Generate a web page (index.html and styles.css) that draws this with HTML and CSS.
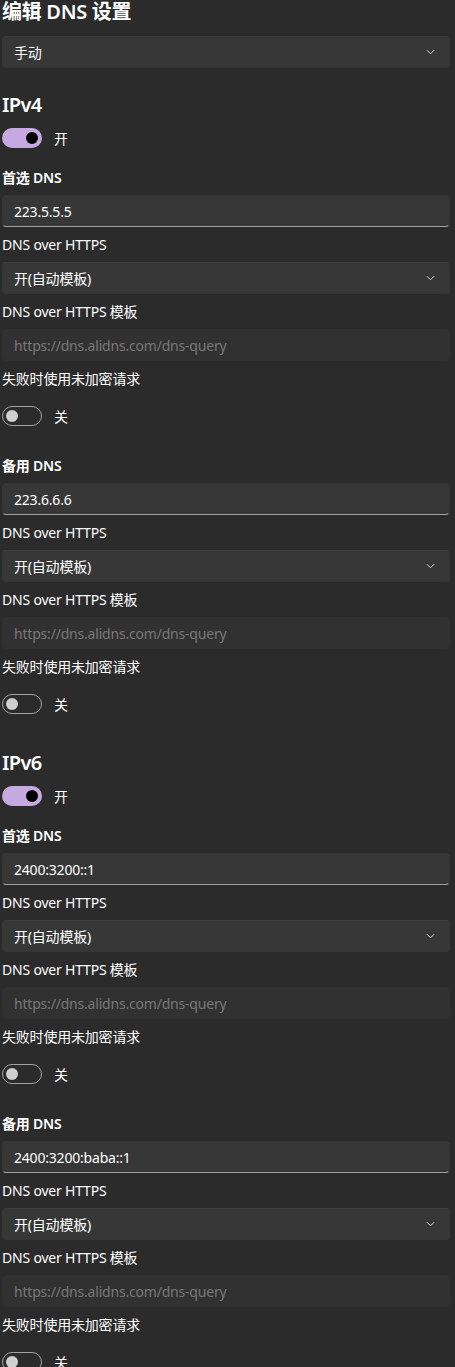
FILE: index.html
```html
<!DOCTYPE html>
<html lang="zh-CN">

<head>
    <meta charset="utf-8">
    <title>编辑 DNS 设置</title>
    <link rel="stylesheet" href="styles.css">
</head>

<body>
    <div class="page">
        <h1 class="title">编辑 DNS 设置</h1>
        <div class="select top-select"><span>手动</span><svg class="chevron" viewBox="0 0 10 6"><polyline points="1,1 5,5 9,1" /></svg></div>

        <!-- IPv4 -->
        <div class="section">
            <h2 class="heading">IPv4</h2>
            <div class="switch-row"><div class="toggle on"><span class="knob"></span></div><span>开</span></div>

            <div class="group">
                <div class="label strong">首选 DNS</div>
                <div class="input filled">223.5.5.5</div>
                <div class="label">DNS over HTTPS</div>
                <div class="select"><span>开(自动模板)</span><svg class="chevron" viewBox="0 0 10 6"><polyline points="1,1 5,5 9,1" /></svg></div>
                <div class="label">DNS over HTTPS 模板</div>
                <div class="input empty">https://dns.alidns.com/dns-query</div>
                <div class="label">失败时使用未加密请求</div>
                <div class="switch-row gap"><div class="toggle off"><span class="knob"></span></div><span>关</span></div>
            </div>

            <div class="group">
                <div class="label strong">备用 DNS</div>
                <div class="input filled">223.6.6.6</div>
                <div class="label">DNS over HTTPS</div>
                <div class="select"><span>开(自动模板)</span><svg class="chevron" viewBox="0 0 10 6"><polyline points="1,1 5,5 9,1" /></svg></div>
                <div class="label">DNS over HTTPS 模板</div>
                <div class="input empty">https://dns.alidns.com/dns-query</div>
                <div class="label">失败时使用未加密请求</div>
                <div class="switch-row gap"><div class="toggle off"><span class="knob"></span></div><span>关</span></div>
            </div>
        </div>

        <!-- IPv6 -->
        <div class="section">
            <h2 class="heading">IPv6</h2>
            <div class="switch-row"><div class="toggle on"><span class="knob"></span></div><span>开</span></div>

            <div class="group">
                <div class="label strong">首选 DNS</div>
                <div class="input filled">2400:3200::1</div>
                <div class="label">DNS over HTTPS</div>
                <div class="select"><span>开(自动模板)</span><svg class="chevron" viewBox="0 0 10 6"><polyline points="1,1 5,5 9,1" /></svg></div>
                <div class="label">DNS over HTTPS 模板</div>
                <div class="input empty">https://dns.alidns.com/dns-query</div>
                <div class="label">失败时使用未加密请求</div>
                <div class="switch-row gap"><div class="toggle off"><span class="knob"></span></div><span>关</span></div>
            </div>

            <div class="group">
                <div class="label strong">备用 DNS</div>
                <div class="input filled">2400:3200:baba::1</div>
                <div class="label">DNS over HTTPS</div>
                <div class="select"><span>开(自动模板)</span><svg class="chevron" viewBox="0 0 10 6"><polyline points="1,1 5,5 9,1" /></svg></div>
                <div class="label">DNS over HTTPS 模板</div>
                <div class="input empty">https://dns.alidns.com/dns-query</div>
                <div class="label">失败时使用未加密请求</div>
                <div class="switch-row gap"><div class="toggle off"><span class="knob"></span></div><span>关</span></div>
            </div>
        </div>
    </div>
</body>

</html>
```

FILE: styles.css
```css
body {
    margin: 0;
    background-color: #2b2b2b;
    color: #ffffff;
    font-family: "Noto Sans", "Noto Sans CJK SC", sans-serif;
    font-size: 14px;
    letter-spacing: -0.2px;
    overflow: hidden;
}

.page {
    padding: 0 5px 0 2px;
}

.title {
    margin: 0;
    font-size: 20px;
    font-weight: 600;
    line-height: 24px;
    letter-spacing: -0.3px;
}

.top-select {
    margin-top: 12px;
}

.section {
    margin-top: 23px;
}

.section + .section {
    margin-top: 25px;
}

.heading {
    margin: 0;
    font-size: 20px;
    font-weight: 600;
    line-height: 28px;
    letter-spacing: -0.6px;
}

.switch-row {
    display: flex;
    align-items: center;
    gap: 12px;
    height: 20px;
    margin-top: 9px;
}

.switch-row.gap {
    margin-top: 17px;
}

.toggle {
    position: relative;
    box-sizing: border-box;
    width: 40px;
    height: 20px;
    border-radius: 10px;
}

.toggle.on {
    background-color: #c6a9e1;
}

.toggle.off {
    border: 1px solid #a3a3a3;
}

.toggle .knob {
    position: absolute;
    top: 50%;
    width: 12px;
    height: 12px;
    margin-top: -6px;
    border-radius: 50%;
}

.toggle.on .knob {
    right: 4px;
    background-color: #000000;
}

.toggle.off .knob {
    left: 3px;
    background-color: #d0d0d0;
}

.group {
    display: flex;
    flex-direction: column;
    margin-top: 20px;
    padding-bottom: 10px;
}

.label {
    line-height: 20px;
    margin-top: 8px;
}

.label:first-child {
    margin-top: 0;
}

.label.strong {
    font-weight: 600;
}

.label + .input,
.label + .select {
    margin-top: 7px;
}

.select,
.input {
    box-sizing: border-box;
    height: 32px;
    display: flex;
    align-items: center;
    padding: 0 11px;
    border-radius: 4px;
    border: 1px solid #353535;
    background-color: #373737;
}

.select {
    justify-content: space-between;
    border-top-color: #3d3d3d;
}

.input.filled {
    border-bottom-color: #a0a0a0;
}

.input.empty {
    background-color: #313131;
    border-color: #303030;
    color: #787878;
}

.chevron {
    width: 9px;
    height: 6px;
    margin-right: 3px;
    fill: none;
    stroke: #cfcfcf;
    stroke-width: 1.1;
}
```
